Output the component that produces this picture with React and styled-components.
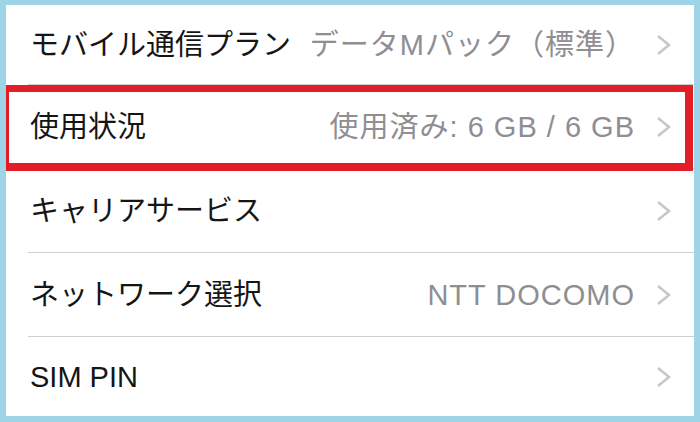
import React from 'react';
import styled, { createGlobalStyle } from 'styled-components';

const rows = [
    { label: 'モバイル通信プラン', value: 'データMパック（標準）', first: true },
    { label: '使用状況', value: '使用済み: 6 GB / 6 GB', marked: true },
    { label: 'キャリアサービス' },
    { label: 'ネットワーク選択', value: 'NTT DOCOMO' },
    { label: 'SIM PIN', last: true },
];

const Chevron = () => (
    <svg width="16" height="22" viewBox="0 0 16 22">
        <polyline points="2,2 13,11 2,20" fill="none" stroke="#c7c7cc" strokeWidth="2.6" />
    </svg>
);

const App = () => {
    return (
        <>
            <GlobalStyle />
            <FRAME>
                {rows.map((row) => (
                    <ROW key={row.label} $first={row.first} $last={row.last} $marked={row.marked}>
                        <INNER $last={row.last}>
                            <LABEL>{row.label}</LABEL>
                            {row.value && <VALUE>{row.value}</VALUE>}
                            <Chevron />
                        </INNER>
                    </ROW>
                ))}
            </FRAME>
        </>
    );
};

export default App;

const GlobalStyle = createGlobalStyle`
    html, body {
        margin: 0;
        padding: 0;
        background: #fff;
    }
    body {
        font-family: "Liberation Sans", "Noto Sans CJK JP", sans-serif;
    }
`;

const FRAME = styled.div`
    width: 700px;
    height: 422px;
    box-sizing: border-box;
    border-style: solid;
    border-color: #9dd5e6;
    border-width: 5px 6px 6px 6px;
    background: #fff;
    overflow: hidden;
    display: flex;
    flex-direction: column;
`;

const ROW = styled.div`
    position: relative;
    height: ${({ $first, $last }) => ($first ? 80 : $last ? 79 : 84)}px;
    padding-left: 22px;
    flex-shrink: 0;
    &::after {
        content: '';
        display: ${({ $marked }) => ($marked ? 'block' : 'none')};
        position: absolute;
        top: 0;
        left: -4px;
        right: 1px;
        bottom: -2px;
        border-style: solid;
        border-color: #e41e26;
        border-width: 7px 8px 8px 7px;
        pointer-events: none;
    }
`;

const INNER = styled.div`
    height: 100%;
    box-sizing: border-box;
    display: flex;
    align-items: center;
    padding-left: 2px;
    padding-right: 22px;
    border-bottom: ${({ $last }) => ($last ? 'none' : '1px solid #cfcfd2')};
`;

const LABEL = styled.span`
    flex: 1;
    font-size: 29px;
    line-height: 34px;
    color: #151515;
    white-space: nowrap;
`;

const VALUE = styled.span`
    font-size: 29px;
    line-height: 34px;
    letter-spacing: 1px;
    color: #8e8e93;
    margin-right: 21px;
    white-space: nowrap;
`;
